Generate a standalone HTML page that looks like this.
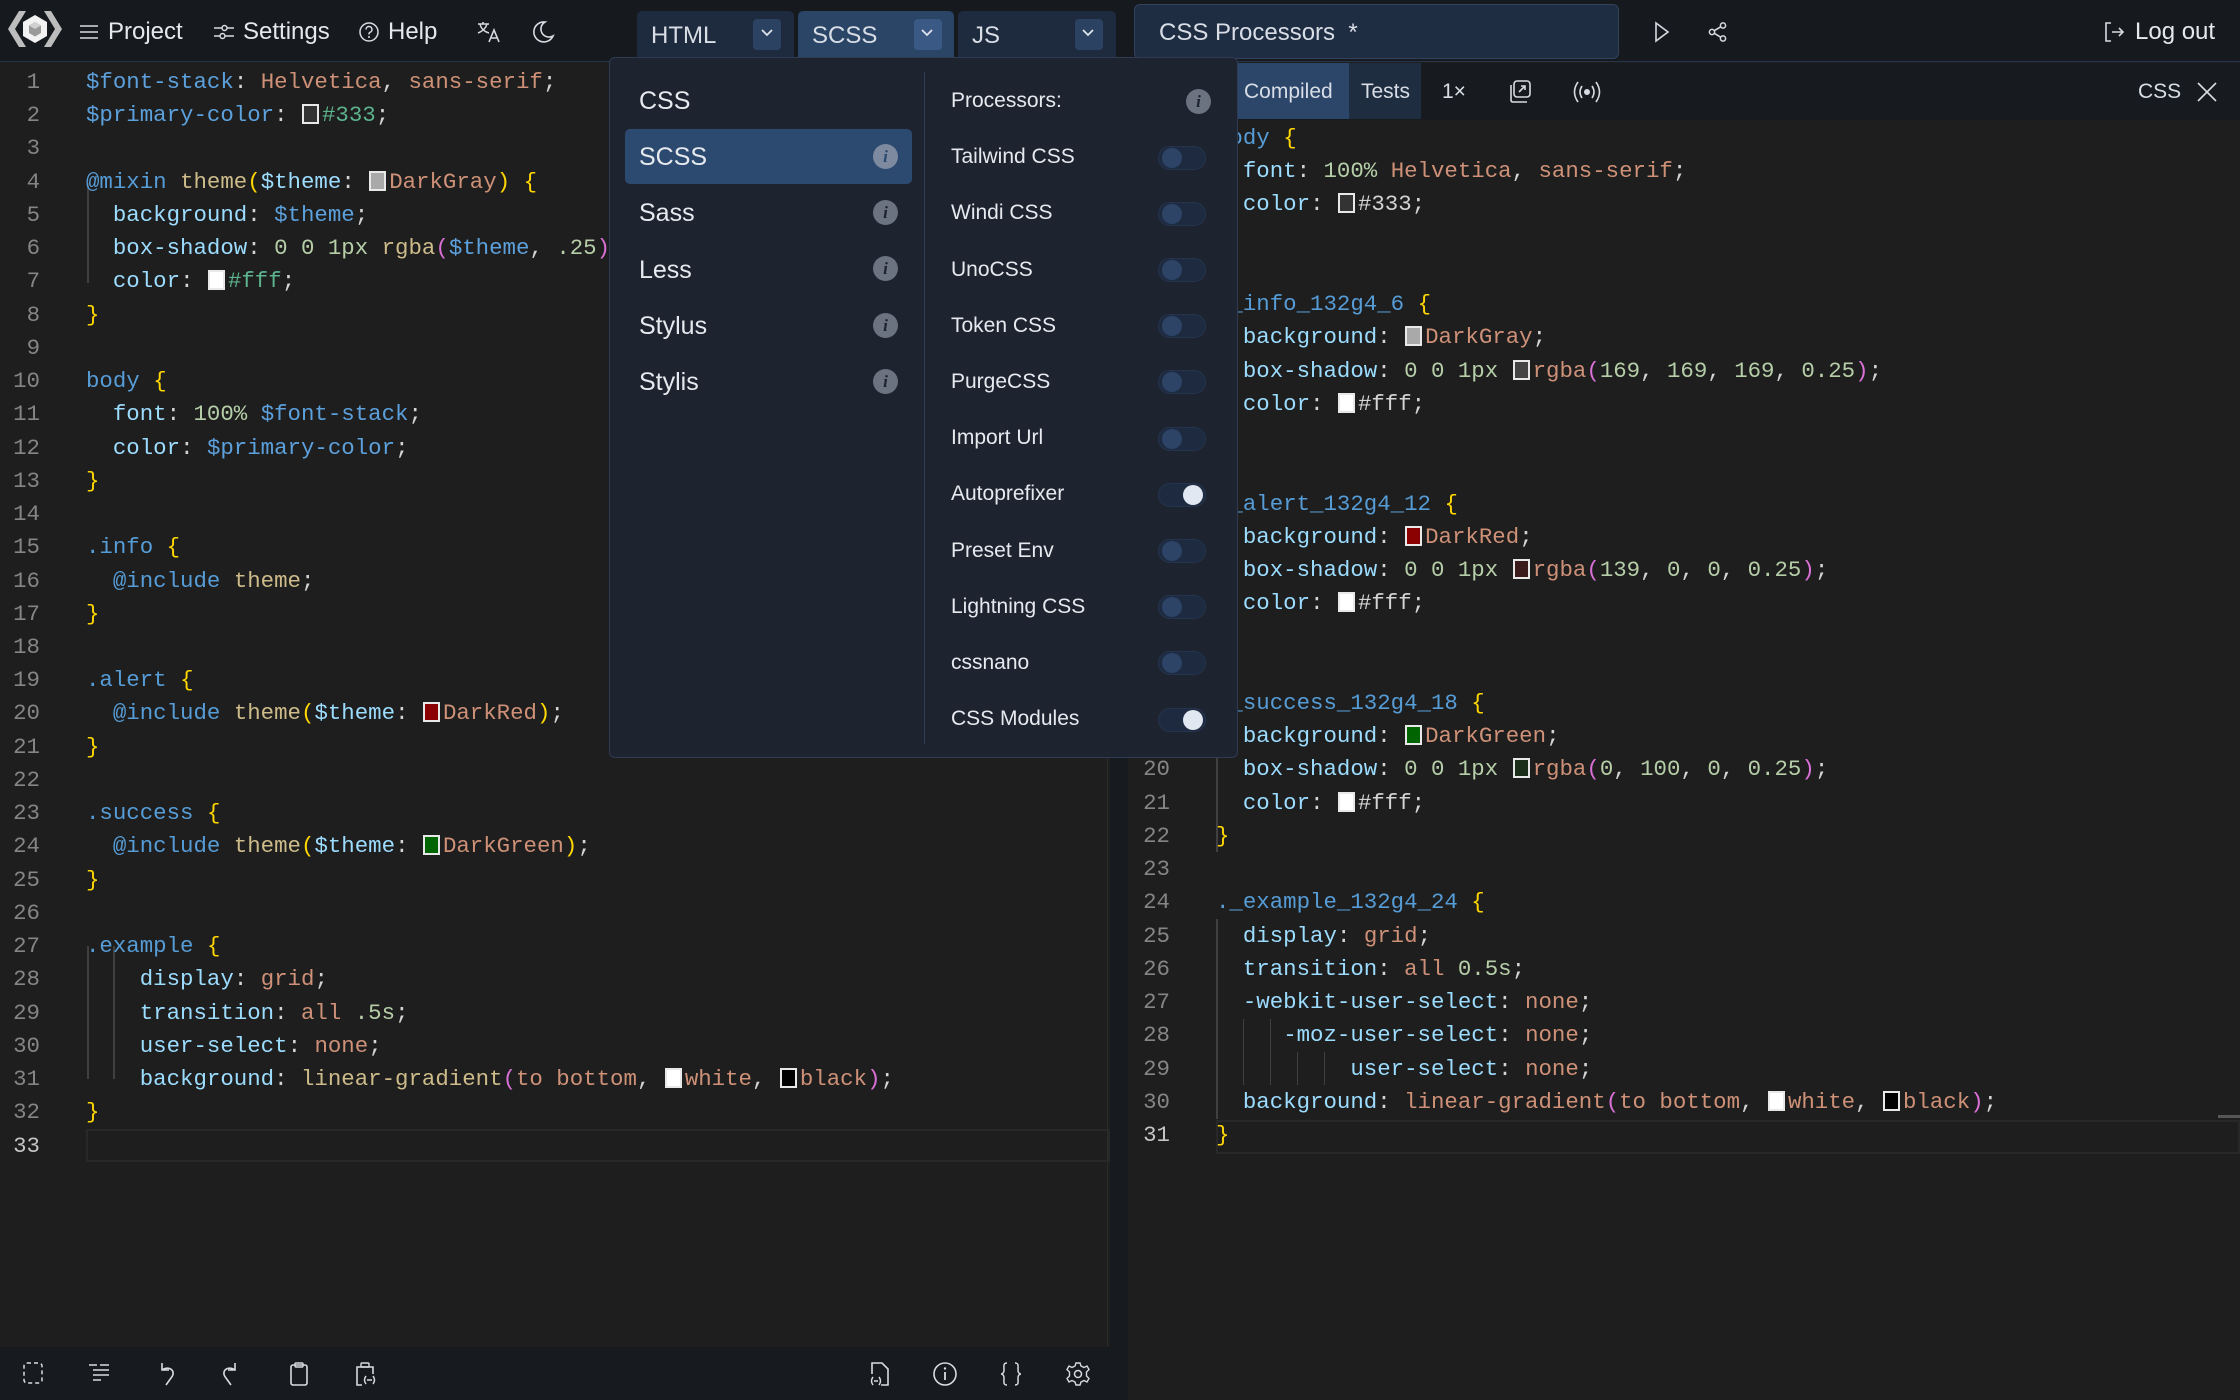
<!DOCTYPE html>
<html><head><meta charset="utf-8">
<style>
*{box-sizing:border-box;margin:0;padding:0}
body{width:2240px;height:1400px;overflow:hidden;background:#1e1e1e;font-family:"Liberation Sans",sans-serif;color:#d4d4d4;position:relative}
.abs{position:absolute}
#hdr{left:0;top:0;width:2240px;height:62px;background:#161a1f;border-bottom:1px solid #25354b}
.hl{position:absolute;top:1px;height:62px;line-height:62px;font-size:24px;color:#e6e8eb}
.tab{position:absolute;top:11px;height:47px;background:#1e2b3e;border-radius:5px 5px 0 0;font-size:24px;line-height:49px;color:#d8dde6;padding-left:14px}
.tab .ch{position:absolute;top:8px;width:28px;height:31px;background:#2b4262;border-radius:4px}
.code{position:absolute;font-family:"Liberation Mono",monospace;font-size:22.4px;white-space:pre;line-height:33.23px;color:#d4d4d4}
.ln{position:absolute;font-family:"Liberation Mono",monospace;font-size:22.4px;line-height:33.23px;color:#858585;text-align:right;white-space:pre}
.p{color:#9cdcfe}.v{color:#5ca0dc}.s{color:#ce9178}.n{color:#b5cea8}.f{color:#cdbb8a}.y{color:#ffd700}.k{color:#da70d6}.b{color:#569cd6}.g{color:#5cb38d}
.sw{display:inline-block;width:17px;height:20px;border:2px solid #e8e8e8;vertical-align:-3px;margin:0 3px 0 1px}
#dd{left:609px;top:57px;width:629px;height:701px;background:#1e2330;border:1px solid #2e3b52;border-radius:6px}
.li{position:absolute;left:29px;font-size:25px;color:#e6e9ee;height:40px;line-height:40px}
.ri{position:absolute;left:341px;font-size:21px;color:#e6e9ee;height:40px;line-height:40px}
.info{position:absolute;width:25px;height:25px;border-radius:50%;background:#6b7280;color:#1e2330;font:italic bold 17px "Liberation Serif",serif;text-align:center;line-height:25px}
.tg{position:absolute;left:548px;width:48px;height:24px;border-radius:12px;background:#1d2a3f;border:1px solid #24344d}
.tg::after{content:"";position:absolute;left:3px;top:1px;width:20px;height:20px;border-radius:50%;background:#2d4466}
.tg.on::after{left:24px;background:#e2e8f2}
.tb{position:absolute;top:1362px}
svg{overflow:visible}
</style></head><body>

<!-- header -->
<div id="hdr" class="abs">
  <svg class="abs" style="left:7px;top:9px" width="56" height="40" viewBox="0 0 56 40">
    <polygon points="12,2 19,2 8,20 19,38 12,38 1,20" fill="#bdbdbd"/>
    <polygon points="44,2 37,2 48,20 37,38 44,38 55,20" fill="#bdbdbd"/>
    <polygon points="28,6 40,13 40,27 28,34 16,27 16,13" fill="#f2f2f2"/>
    <polygon points="28,13 34,16.5 34,24 28,27.5 22,24 22,16.5" fill="#9a9a9a"/>
    <polygon points="28,13 34,16.5 28,20 22,16.5" fill="#d0d0d0"/>
  </svg>
  <svg class="abs" style="left:80px;top:24px" width="18" height="16"><path d="M0 2H18M0 8H18M0 14H18" stroke="#d8dbe0" stroke-width="1.6"/></svg>
  <div class="hl" style="left:108px">Project</div>
  <svg class="abs" style="left:214px;top:23px" width="20" height="18"><path d="M0 5H8M13 5H20M0 13H6M11 13H20" stroke="#d8dbe0" stroke-width="1.6"/><circle cx="10.5" cy="5" r="2.5" stroke="#d8dbe0" fill="none" stroke-width="1.5"/><circle cx="8.5" cy="13" r="2.5" stroke="#d8dbe0" fill="none" stroke-width="1.5"/></svg>
  <div class="hl" style="left:243px">Settings</div>
  <svg class="abs" style="left:359px;top:22px" width="20" height="20"><circle cx="10" cy="10" r="9" stroke="#d8dbe0" fill="none" stroke-width="1.5"/><path d="M7 7.5a3 3 0 1 1 4 2.8c-1 .4-1 1-1 2.2" stroke="#d8dbe0" fill="none" stroke-width="1.5"/><circle cx="10" cy="15" r="1" fill="#d8dbe0"/></svg>
  <div class="hl" style="left:388px">Help</div>
  <svg class="abs" style="left:477px;top:21px" width="24" height="22"><path d="M1 3H12M6 1V3M3 3C4 8 8 11 12 12M10 3C9 7 6 10 1 12" stroke="#d8dbe0" fill="none" stroke-width="1.5"/><path d="M12 21L17 9L22 21M14 17H20" stroke="#d8dbe0" fill="none" stroke-width="1.6"/></svg>
  <svg class="abs" style="left:534px;top:21px" width="20" height="22"><path d="M11 1A10 10 0 1 0 19 15A8 8 0 0 1 11 1Z" stroke="#d8dbe0" fill="none" stroke-width="1.6"/></svg>

  <div class="tab" style="left:637px;width:157px">HTML<div class="ch" style="left:116px"></div></div>
  <div class="tab" style="left:798px;width:156px;background:#2a4565">SCSS<div class="ch" style="left:116px;background:#3a5a85"></div></div>
  <div class="tab" style="left:958px;width:158px">JS<div class="ch" style="left:117px"></div></div>
  <svg class="abs" style="left:761px;top:29px" width="12" height="8"><path d="M1 1L6 6L11 1" stroke="#dfe4ec" fill="none" stroke-width="1.8"/></svg>
  <svg class="abs" style="left:921px;top:29px" width="12" height="8"><path d="M1 1L6 6L11 1" stroke="#dfe4ec" fill="none" stroke-width="1.8"/></svg>
  <svg class="abs" style="left:1082px;top:29px" width="12" height="8"><path d="M1 1L6 6L11 1" stroke="#dfe4ec" fill="none" stroke-width="1.8"/></svg>

  <div class="abs" style="left:1134px;top:4px;width:485px;height:55px;background:#1f2d42;border:1px solid #30425c;border-radius:6px;font-size:24px;line-height:55px;padding-left:24px;color:#d8dde6;white-space:pre">CSS Processors  *</div>
  <svg class="abs" style="left:1654px;top:22px" width="16" height="20"><path d="M2 1L14 10L2 19Z" stroke="#d8dbe0" fill="none" stroke-width="1.6"/></svg>
  <svg class="abs" style="left:1708px;top:22px" width="20" height="20"><circle cx="15" cy="3.5" r="2.6" stroke="#d8dbe0" fill="none" stroke-width="1.5"/><circle cx="4" cy="10" r="2.6" stroke="#d8dbe0" fill="none" stroke-width="1.5"/><circle cx="15" cy="16.5" r="2.6" stroke="#d8dbe0" fill="none" stroke-width="1.5"/><path d="M6.3 8.7L12.7 4.8M6.3 11.3L12.7 15.2" stroke="#d8dbe0" stroke-width="1.5"/></svg>
  <svg class="abs" style="left:2104px;top:22px" width="22" height="20"><path d="M7 1H2V19H7M8 10H19M15 6L19 10L15 14" stroke="#d8dbe0" fill="none" stroke-width="1.6"/></svg>
  <div class="hl" style="left:2135px">Log out</div>
</div>

<!-- left editor -->
<div class="abs" style="left:0;top:63px;width:1110px;height:1284px;background:#1e1e1e"></div>
<div class="abs" style="left:1107px;top:63px;width:1px;height:1284px;background:#2c2c2c"></div>
<div class="abs" style="left:86px;top:1129px;width:1024px;height:33px;border:2px solid #282828"></div>
<div class="abs" style="left:87px;top:183px;width:2px;height:100px;background:#404040"></div>
<div class="abs" style="left:87px;top:946px;width:2px;height:133px;background:#404040"></div>
<div class="abs" style="left:113px;top:946px;width:2px;height:133px;background:#404040"></div>
<div class="ln" style="left:0;top:66px;width:40px">1
2
3
4
5
6
7
8
9
10
11
12
13
14
15
16
17
18
19
20
21
22
23
24
25
26
27
28
29
30
31
32
<span style="color:#c6c6c6">33</span></div>
<div class="code" style="left:86px;top:66px"><span class="v">$font-stack</span>: <span class="s">Helvetica</span>, <span class="s">sans-serif</span>;
<span class="v">$primary-color</span>: <span class="sw" style="background:#333"></span><span class="g">#333</span>;

<span class="b">@mixin</span> <span class="f">theme</span><span class="y">(</span><span class="p">$theme</span>: <span class="sw" style="background:#a9a9a9"></span><span class="s">DarkGray</span><span class="y">)</span> <span class="y">{</span>
  <span class="p">background</span>: <span class="v">$theme</span>;
  <span class="p">box-shadow</span>: <span class="n">0 0 1px</span> <span class="f">rgba</span><span class="k">(</span><span class="v">$theme</span>, <span class="n">.25</span><span class="k">)</span>;
  <span class="p">color</span>: <span class="sw" style="background:#fff"></span><span class="g">#fff</span>;
<span class="y">}</span>

<span class="b">body</span> <span class="y">{</span>
  <span class="p">font</span>: <span class="n">100%</span> <span class="v">$font-stack</span>;
  <span class="p">color</span>: <span class="v">$primary-color</span>;
<span class="y">}</span>

<span class="b">.info</span> <span class="y">{</span>
  <span class="b">@include</span> <span class="f">theme</span>;
<span class="y">}</span>

<span class="b">.alert</span> <span class="y">{</span>
  <span class="b">@include</span> <span class="f">theme</span><span class="y">(</span><span class="p">$theme</span>: <span class="sw" style="background:#8b0000"></span><span class="s">DarkRed</span><span class="y">)</span>;
<span class="y">}</span>

<span class="b">.success</span> <span class="y">{</span>
  <span class="b">@include</span> <span class="f">theme</span><span class="y">(</span><span class="p">$theme</span>: <span class="sw" style="background:#006400"></span><span class="s">DarkGreen</span><span class="y">)</span>;
<span class="y">}</span>

<span class="b">.example</span> <span class="y">{</span>
    <span class="p">display</span>: <span class="s">grid</span>;
    <span class="p">transition</span>: <span class="s">all</span> <span class="n">.5s</span>;
    <span class="p">user-select</span>: <span class="s">none</span>;
    <span class="p">background</span>: <span class="f">linear-gradient</span><span class="k">(</span><span class="s">to bottom</span>, <span class="sw" style="background:#fff"></span><span class="s">white</span>, <span class="sw" style="background:#000"></span><span class="s">black</span><span class="k">)</span>;
<span class="y">}</span>
</div>

<!-- left bottom toolbar -->
<div class="abs" style="left:0;top:1347px;width:1110px;height:53px;background:#171a1f"></div>
<svg class="tb" style="left:23px" width="20" height="22"><rect x="1" y="1" width="18" height="20" rx="3" stroke="#d8dbe0" fill="none" stroke-width="1.5" stroke-dasharray="4 3"/></svg>
<svg class="tb" style="left:89px" width="20" height="22"><path d="M0 3H8M11 3H20M4 8H20M4 13H20M4 18H12" stroke="#d8dbe0" stroke-width="1.6"/></svg>
<svg class="tb" style="left:157px" width="18" height="24"><path d="M5 1V8H12M5 8C12 3 20 9 14 16L9 23" stroke="#d8dbe0" fill="none" stroke-width="1.6"/></svg>
<svg class="tb" style="left:222px" width="18" height="24"><path d="M13 1V8H6M13 8C6 3 -2 9 4 16L9 23" stroke="#d8dbe0" fill="none" stroke-width="1.6"/></svg>
<svg class="tb" style="left:290px" width="18" height="24"><rect x="1" y="3" width="16" height="20" rx="2" stroke="#d8dbe0" fill="none" stroke-width="1.6"/><rect x="5" y="1" width="8" height="4" rx="1" stroke="#d8dbe0" fill="none" stroke-width="1.4"/></svg>
<svg class="tb" style="left:356px" width="20" height="24"><path d="M17 12V5H1V23H6" stroke="#d8dbe0" fill="none" stroke-width="1.6"/><rect x="5" y="1" width="8" height="4" rx="1" stroke="#d8dbe0" fill="none" stroke-width="1.4"/><path d="M10 14Q7 18 10 22M17 14Q20 18 17 22M11 18H16" stroke="#d8dbe0" fill="none" stroke-width="1.5"/></svg>
<svg class="tb" style="left:869px" width="20" height="24"><path d="M3 12V1H13L19 7V23H12" stroke="#d8dbe0" fill="none" stroke-width="1.6"/><path d="M4 15Q1 19 4 23M10 15Q13 19 10 23M5 19H9" stroke="#d8dbe0" fill="none" stroke-width="1.5"/></svg>
<svg class="tb" style="left:933px" width="24" height="24"><circle cx="12" cy="12" r="11" stroke="#d8dbe0" fill="none" stroke-width="1.6"/><path d="M12 10V18" stroke="#d8dbe0" stroke-width="1.8"/><circle cx="12" cy="6.5" r="1.2" fill="#d8dbe0"/></svg>
<svg class="tb" style="left:999px" width="24" height="24"><path d="M8 1C4 1 5 4 5 8S2 12 2 12S5 12 5 16S4 23 8 23M16 1C20 1 19 4 19 8S22 12 22 12S19 12 19 16S20 23 16 23" stroke="#d8dbe0" fill="none" stroke-width="1.5"/></svg>
<svg class="tb" style="left:1066px" width="24" height="24"><circle cx="12" cy="12" r="3.5" stroke="#d8dbe0" fill="none" stroke-width="1.5"/><path d="M10 1H14L15 4L18 5.5L21 4L23 7.5L20.5 10V14L23 16.5L21 20L18 18.5L15 20L14 23H10L9 20L6 18.5L3 20L1 16.5L3.5 14V10L1 7.5L3 4L6 5.5L9 4Z" stroke="#d8dbe0" fill="none" stroke-width="1.4"/></svg>

<!-- divider -->
<div class="abs" style="left:1110px;top:63px;width:18px;height:1337px;background:#171a1f"></div>

<!-- right pane -->
<div class="abs" style="left:1128px;top:63px;width:1112px;height:57px;background:#171a1f"></div>
<div class="abs" style="left:1236px;top:63px;width:113px;height:56px;background:#2b4668;color:#d8dde6;font-size:21px;line-height:58px;padding-left:8px">Compiled</div>
<div class="abs" style="left:1349px;top:63px;width:72px;height:56px;background:#1f2d40;color:#d8dde6;font-size:21px;line-height:58px;padding-left:12px">Tests</div>
<div class="abs" style="left:1442px;top:63px;font-size:21px;line-height:58px;color:#d8dde6">1×</div>
<svg class="abs" style="left:1510px;top:80px" width="22" height="24"><rect x="4" y="1" width="16" height="16" rx="3" stroke="#d8dbe0" fill="none" stroke-width="1.6"/><path d="M1 5V20Q1 22 3 22H17M9 12L15 6M11 6H15V10" stroke="#d8dbe0" fill="none" stroke-width="1.6"/></svg>
<svg class="abs" style="left:1572px;top:81px" width="30" height="22"><path d="M6 1Q-1 11 6 21M24 1Q31 11 24 21M10 5Q6 11 10 17M20 5Q24 11 20 17" stroke="#d8dbe0" fill="none" stroke-width="1.6"/><circle cx="15" cy="11" r="3" fill="#d8dbe0"/></svg>
<div class="abs" style="left:2138px;top:63px;font-size:21px;line-height:58px;color:#d8dde6">CSS</div>
<svg class="abs" style="left:2197px;top:82px" width="20" height="20"><path d="M1 1L19 19M19 1L1 19" stroke="#d8dbe0" stroke-width="1.6"/></svg>

<div class="abs" style="left:1216px;top:1120px;width:1024px;height:34px;border:2px solid #282828"></div>
<div class="abs" style="left:1216px;top:155px;width:2px;height:66px;background:#404040"></div>
<div class="abs" style="left:1216px;top:354px;width:2px;height:100px;background:#404040"></div>
<div class="abs" style="left:1216px;top:553px;width:2px;height:100px;background:#404040"></div>
<div class="abs" style="left:1216px;top:753px;width:2px;height:99px;background:#404040"></div>
<div class="abs" style="left:1216px;top:919px;width:2px;height:200px;background:#404040"></div>
<div class="abs" style="left:1243px;top:1019px;width:1px;height:66px;background:#404040"></div>
<div class="abs" style="left:1270px;top:1019px;width:1px;height:66px;background:#404040"></div>
<div class="abs" style="left:1297px;top:1052px;width:1px;height:33px;background:#404040"></div>
<div class="abs" style="left:1324px;top:1052px;width:1px;height:33px;background:#404040"></div>
<div class="abs" style="left:2218px;top:1115px;width:22px;height:3px;background:#555"></div>
<div class="ln" style="left:1120px;top:122px;width:50px">1
2
3
4
5
6
7
8
9
10
11
12
13
14
15
16
17
18
19
20
21
22
23
24
25
26
27
28
29
30
<span style="color:#c6c6c6">31</span></div>
<div class="code" style="left:1216px;top:122px"><span class="b">body</span> <span class="y">{</span>
  <span class="p">font</span>: <span class="n">100%</span> <span class="s">Helvetica</span>, <span class="s">sans-serif</span>;
  <span class="p">color</span>: <span class="sw" style="background:#333"></span>#333;
<span class="y">}</span>

<span class="b">._info_132g4_6</span> <span class="y">{</span>
  <span class="p">background</span>: <span class="sw" style="background:#a9a9a9"></span><span class="s">DarkGray</span>;
  <span class="p">box-shadow</span>: <span class="n">0 0 1px</span> <span class="sw" style="background:#444"></span><span class="s">rgba</span><span class="k">(</span><span class="n">169</span>, <span class="n">169</span>, <span class="n">169</span>, <span class="n">0.25</span><span class="k">)</span>;
  <span class="p">color</span>: <span class="sw" style="background:#fff"></span>#fff;
<span class="y">}</span>

<span class="b">._alert_132g4_12</span> <span class="y">{</span>
  <span class="p">background</span>: <span class="sw" style="background:#8b0000"></span><span class="s">DarkRed</span>;
  <span class="p">box-shadow</span>: <span class="n">0 0 1px</span> <span class="sw" style="background:#3a1a1a"></span><span class="s">rgba</span><span class="k">(</span><span class="n">139</span>, <span class="n">0</span>, <span class="n">0</span>, <span class="n">0.25</span><span class="k">)</span>;
  <span class="p">color</span>: <span class="sw" style="background:#fff"></span>#fff;
<span class="y">}</span>

<span class="b">._success_132g4_18</span> <span class="y">{</span>
  <span class="p">background</span>: <span class="sw" style="background:#006400"></span><span class="s">DarkGreen</span>;
  <span class="p">box-shadow</span>: <span class="n">0 0 1px</span> <span class="sw" style="background:#1a2e1a"></span><span class="s">rgba</span><span class="k">(</span><span class="n">0</span>, <span class="n">100</span>, <span class="n">0</span>, <span class="n">0.25</span><span class="k">)</span>;
  <span class="p">color</span>: <span class="sw" style="background:#fff"></span>#fff;
<span class="y">}</span>

<span class="b">._example_132g4_24</span> <span class="y">{</span>
  <span class="p">display</span>: <span class="s">grid</span>;
  <span class="p">transition</span>: <span class="s">all</span> <span class="n">0.5s</span>;
  <span class="p">-webkit-user-select</span>: <span class="s">none</span>;
     <span class="p">-moz-user-select</span>: <span class="s">none</span>;
          <span class="p">user-select</span>: <span class="s">none</span>;
  <span class="p">background</span>: <span class="s">linear-gradient</span><span class="k">(</span><span class="s">to bottom</span>, <span class="sw" style="background:#fff"></span><span class="s">white</span>, <span class="sw" style="background:#000"></span><span class="s">black</span><span class="k">)</span>;
<span class="y">}</span></div>

<!-- dropdown -->
<div id="dd" class="abs">
  <div class="li" style="top:23px">CSS</div>
  <div class="abs" style="left:15px;top:71px;width:287px;height:55px;background:#2c4a70;border-radius:5px"></div>
  <div class="li" style="top:79px">SCSS</div>
  <div class="info" style="left:263px;top:86px;background:#7d8aa0;color:#2c4a70">i</div>
  <div class="li" style="top:135px">Sass</div>
  <div class="info" style="left:263px;top:142px">i</div>
  <div class="li" style="top:192px">Less</div>
  <div class="info" style="left:263px;top:198px">i</div>
  <div class="li" style="top:248px">Stylus</div>
  <div class="info" style="left:263px;top:255px">i</div>
  <div class="li" style="top:304px">Stylis</div>
  <div class="info" style="left:263px;top:311px">i</div>
  <div class="abs" style="left:314px;top:14px;width:1px;height:672px;background:#2e3d55"></div>
  <div class="ri" style="top:23px">Processors:</div>
  <div class="info" style="left:576px;top:31px">i</div>
  <div class="ri" style="top:79px">Tailwind CSS</div><div class="tg" style="top:88px"></div>
  <div class="ri" style="top:135px">Windi CSS</div><div class="tg" style="top:144px"></div>
  <div class="ri" style="top:192px">UnoCSS</div><div class="tg" style="top:200px"></div>
  <div class="ri" style="top:248px">Token CSS</div><div class="tg" style="top:256px"></div>
  <div class="ri" style="top:304px">PurgeCSS</div><div class="tg" style="top:312px"></div>
  <div class="ri" style="top:360px">Import Url</div><div class="tg" style="top:369px"></div>
  <div class="ri" style="top:416px">Autoprefixer</div><div class="tg on" style="top:425px"></div>
  <div class="ri" style="top:473px">Preset Env</div><div class="tg" style="top:481px"></div>
  <div class="ri" style="top:529px">Lightning CSS</div><div class="tg" style="top:537px"></div>
  <div class="ri" style="top:585px">cssnano</div><div class="tg" style="top:593px"></div>
  <div class="ri" style="top:641px">CSS Modules</div><div class="tg on" style="top:650px"></div>
</div>
</body></html>
